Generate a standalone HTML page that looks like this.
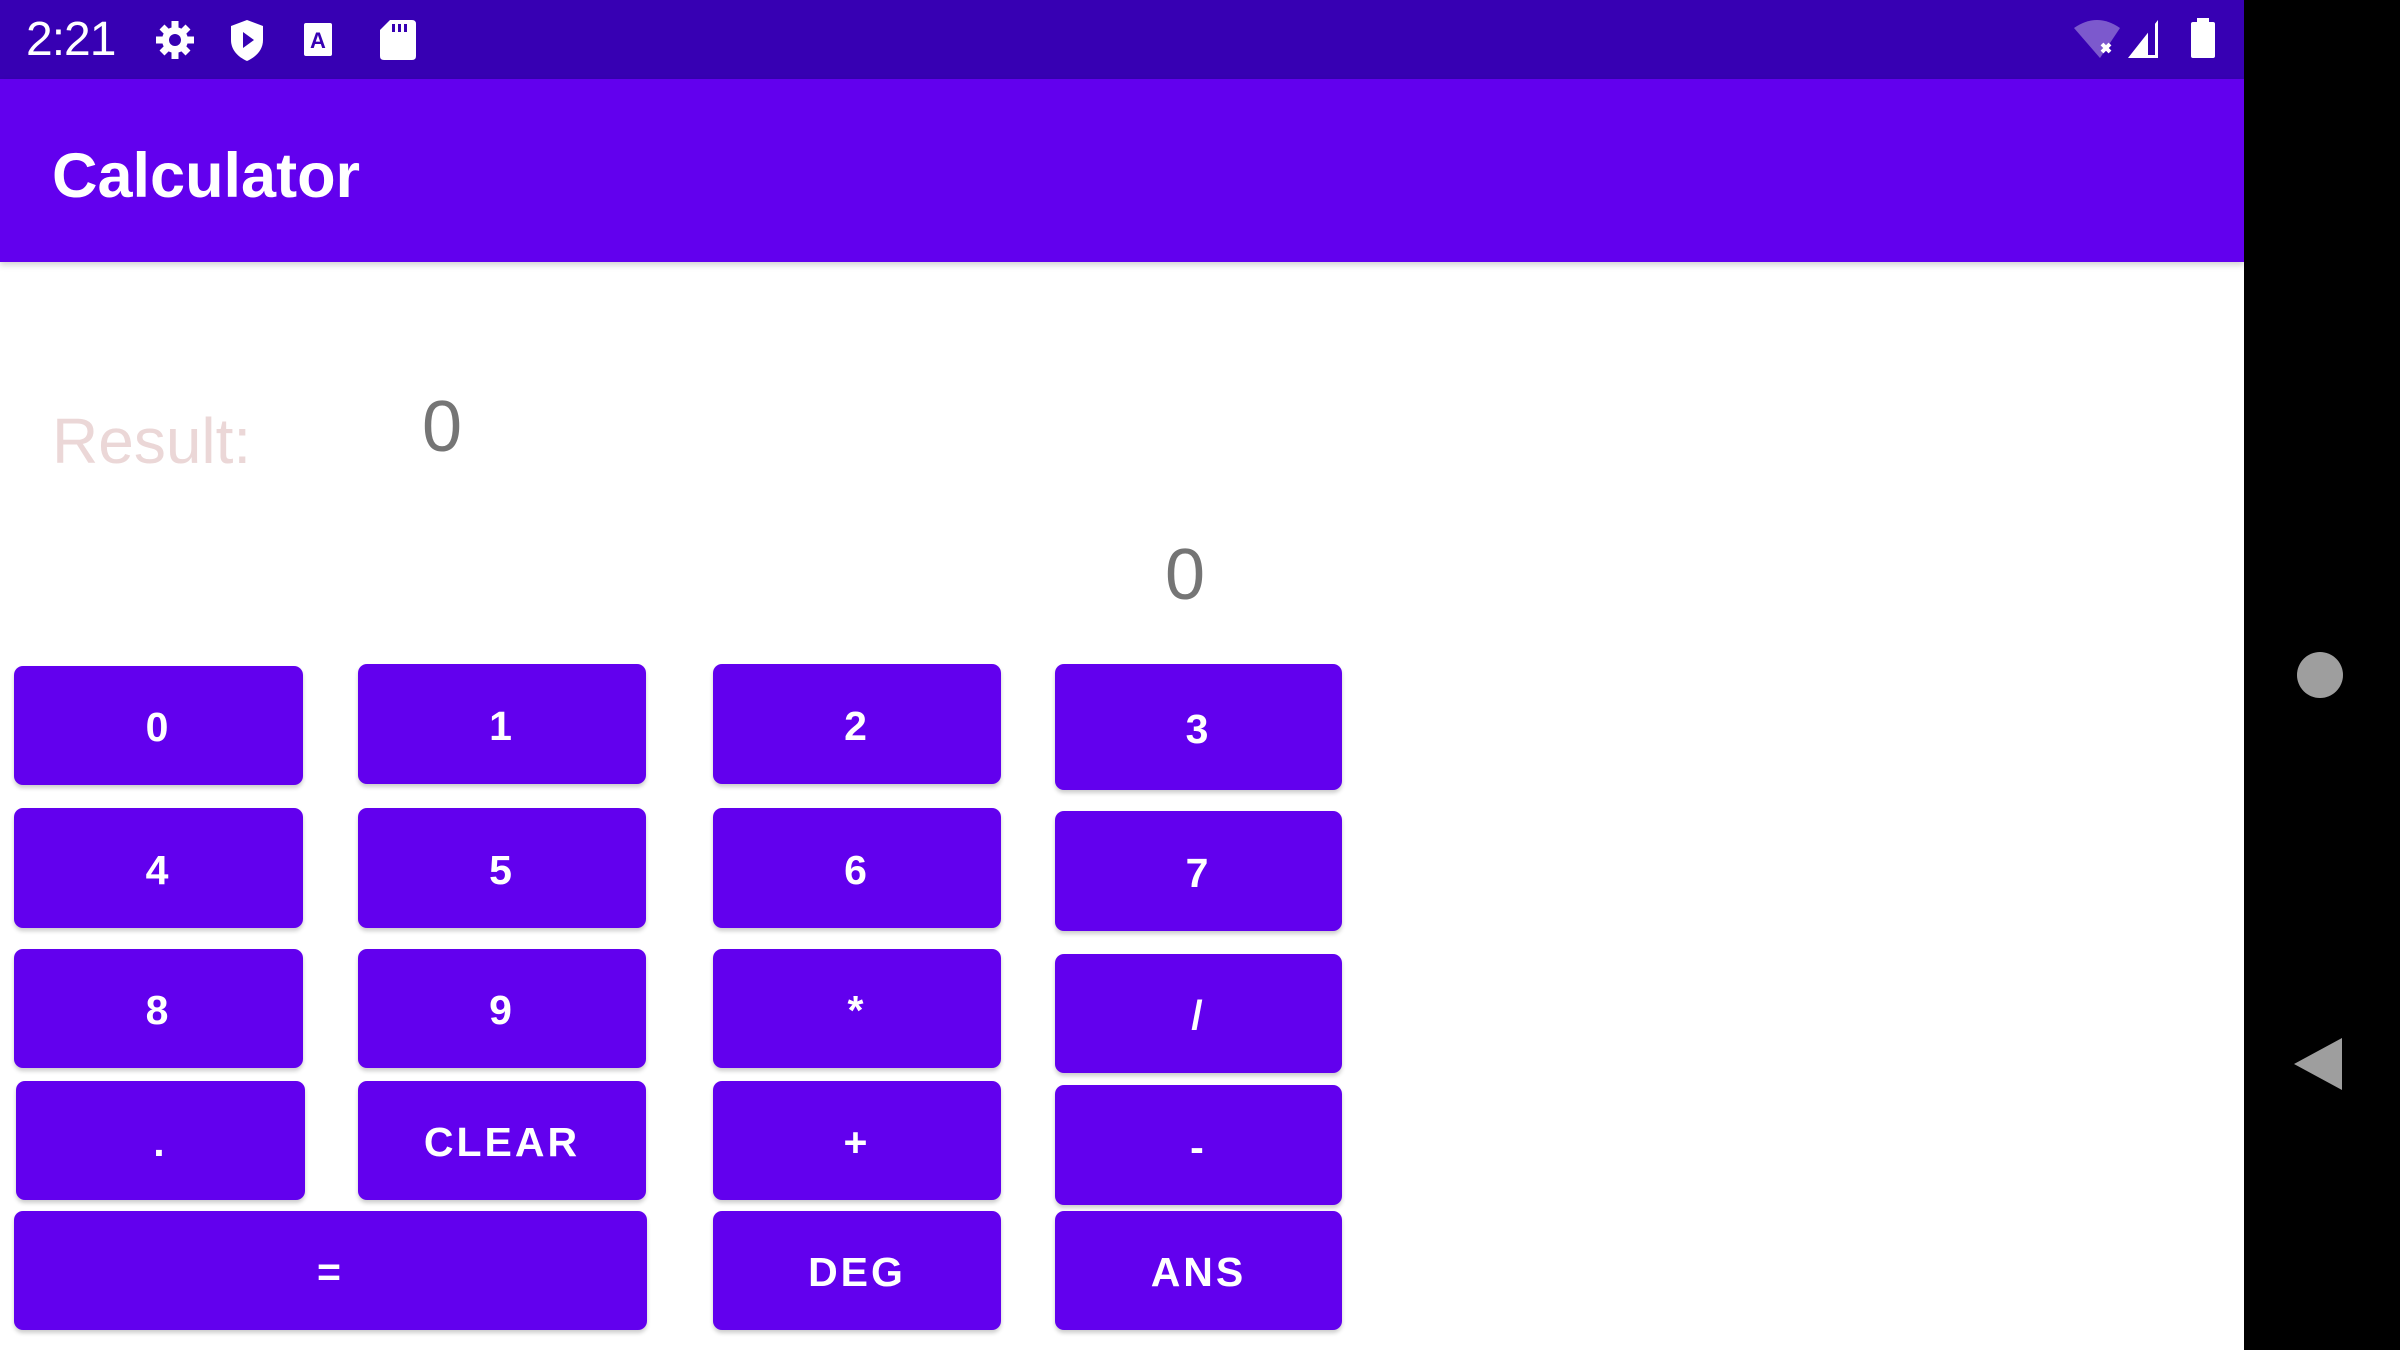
<!DOCTYPE html>
<html><head><meta charset="utf-8"><style>
*{margin:0;padding:0;box-sizing:border-box}
body{width:2400px;height:1350px;position:relative;background:#fff;overflow:hidden;font-family:"Liberation Sans",sans-serif}
.sb{position:absolute;left:0;top:0;width:2244px;height:79px;background:#3700b3}
.ab{position:absolute;left:0;top:79px;width:2244px;height:183px;background:#6200ee;box-shadow:0 3px 6px rgba(0,0,0,.18)}
.nav{position:absolute;left:2244px;top:0;width:156px;height:1350px;background:#000}
.b{position:absolute;background:#6200ee;border-radius:9px;color:#fff;font-weight:bold;font-size:41px;letter-spacing:3px;display:flex;align-items:center;justify-content:center;padding-top:4px;box-shadow:0 3px 4px rgba(0,0,0,.2)}
.t{position:absolute;white-space:nowrap}
</style></head><body>
<div class="sb"></div>
<div class="t" style="left:26px;top:12px;color:#fff;font-size:48px;letter-spacing:-1px">2:21</div>
<svg style="position:absolute;left:152px;top:18px" width="280" height="46" viewBox="0 0 280 46">
<g fill="#fff">
<circle cx="23" cy="22" r="13"/>
<g stroke="#fff" stroke-width="7"><line x1="23" y1="3" x2="23" y2="41"/><line x1="4" y1="22" x2="42" y2="22"/><line x1="10" y1="9" x2="36" y2="35"/><line x1="36" y1="9" x2="10" y2="35"/></g>
<circle cx="23" cy="22" r="6" fill="#3700b3"/>
<path d="M95 2 L79 8 V22 C79 32 86 39 95 43 C104 39 111 32 111 22 V8 Z"/>
<path d="M91 14 L102 22 L91 30 Z" fill="#3700b3"/>
<rect x="152" y="5" width="28" height="33" rx="2"/>
<text x="166" y="30" font-size="22" font-weight="bold" fill="#3700b3" text-anchor="middle" font-family="Liberation Sans">A</text>
<path d="M238 2 H260 Q264 2 264 6 V38 Q264 42 260 42 H232 Q228 42 228 38 V12 Z"/>
<rect x="240" y="6" width="3" height="8" fill="#3700b3"/><rect x="246" y="6" width="3" height="8" fill="#3700b3"/><rect x="252" y="6" width="3" height="8" fill="#3700b3"/>
</g></svg>
<svg style="position:absolute;left:2070px;top:16px" width="150" height="46" viewBox="0 0 150 46">
<path d="M4 12 Q27 -4 50 12 L30 42 Z" fill="#fff" opacity=".35"/>
<path d="M32 28 L40 36 M40 28 L32 36" stroke="#fff" stroke-width="4"/>
<path d="M58 42 L88 4 V42 Z" fill="#fff"/>
<path d="M78 39 V15 L85 7 V39 Z" fill="#3700b3"/>
<rect x="121" y="6" width="24" height="36" rx="2" fill="#fff"/><rect x="127" y="2" width="12" height="6" fill="#fff"/>
</svg>
<div class="ab"></div>
<div class="t" style="left:52px;top:140px;color:#fff;font-size:63px;font-weight:bold">Calculator</div>
<div class="nav"></div>
<div style="position:absolute;left:2297px;top:652px;width:46px;height:46px;border-radius:50%;background:#9e9e9e"></div>
<svg style="position:absolute;left:2292px;top:1036px" width="52" height="56"><path d="M2 28 L50 2 V54 Z" fill="#9e9e9e"/></svg>
<div class="t" style="left:52px;top:404px;color:#ebd7d7;font-size:64px">Result:</div>
<div class="t" style="left:422px;top:386px;color:#757575;font-size:72px">0</div>
<div class="t" style="left:1165px;top:534px;color:#757575;font-size:72px">0</div>

<div class="b" style="left:14px;top:666px;width:289px;height:119px">0</div>
<div class="b" style="left:358px;top:664px;width:288px;height:120px">1</div>
<div class="b" style="left:713px;top:664px;width:288px;height:120px">2</div>
<div class="b" style="left:1055px;top:664px;width:287px;height:126px">3</div>
<div class="b" style="left:14px;top:808px;width:289px;height:120px">4</div>
<div class="b" style="left:358px;top:808px;width:288px;height:120px">5</div>
<div class="b" style="left:713px;top:808px;width:288px;height:120px">6</div>
<div class="b" style="left:1055px;top:811px;width:287px;height:120px">7</div>
<div class="b" style="left:14px;top:949px;width:289px;height:119px">8</div>
<div class="b" style="left:358px;top:949px;width:288px;height:119px">9</div>
<div class="b" style="left:713px;top:949px;width:288px;height:119px">*</div>
<div class="b" style="left:1055px;top:954px;width:287px;height:119px">/</div>
<div class="b" style="left:16px;top:1081px;width:289px;height:119px">.</div>
<div class="b" style="left:358px;top:1081px;width:288px;height:119px">CLEAR</div>
<div class="b" style="left:713px;top:1081px;width:288px;height:119px">+</div>
<div class="b" style="left:1055px;top:1085px;width:287px;height:120px">-</div>
<div class="b" style="left:14px;top:1211px;width:633px;height:119px">=</div>
<div class="b" style="left:713px;top:1211px;width:288px;height:119px">DEG</div>
<div class="b" style="left:1055px;top:1211px;width:287px;height:119px">ANS</div>
</body></html>
